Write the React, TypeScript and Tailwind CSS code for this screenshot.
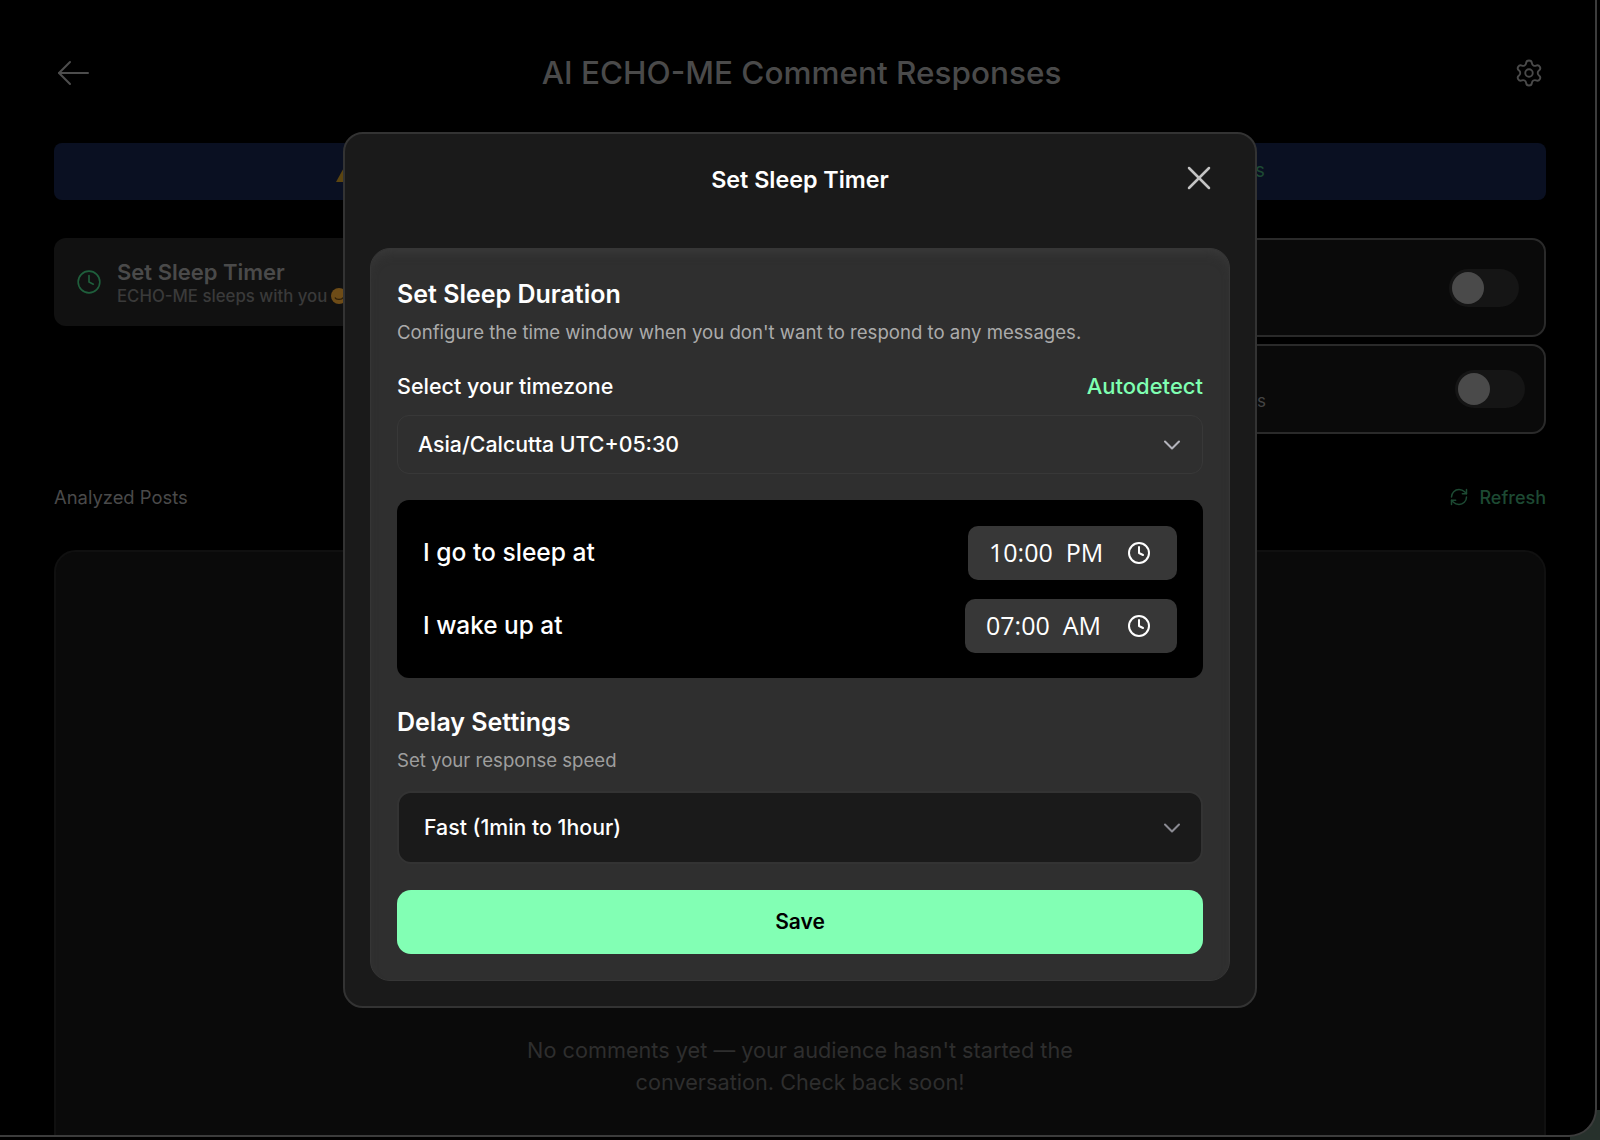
import React from 'react';
import { ChevronDown, Clock, RefreshCw, Settings, X } from 'lucide-react';

const font = "font-['Inter','Liberation_Sans',sans-serif]";

const Toggle: React.FC = () => (
  <div className="w-[70px] h-[38px] rounded-full bg-[#151515] flex items-center px-[3px]">
    <div className="w-8 h-8 rounded-full bg-[#4a4a4a]" />
  </div>
);

const TimeField: React.FC<{ value: string; wide?: boolean }> = ({ value, wide }) => (
  <div className={`h-[54px] rounded-[10px] bg-[#373737] flex items-center justify-between pr-[26px] pl-[21px] ${wide ? 'w-[212px]' : 'w-[209px]'}`}>
    <span className="font-['Open_Sans',sans-serif] text-[25px] text-white whitespace-pre">{value}</span>
    <Clock size={24} strokeWidth={2} className="text-white" />
  </div>
);

function Background() {
  return (
    <div className="pl-[54px] pr-[49px]">
      <header className="h-[42px] mt-[52px] flex items-center justify-between">
        <svg width="32" height="26" viewBox="0 0 32 26" fill="none" stroke="#4d4d4d" strokeWidth="2" strokeLinecap="round" strokeLinejoin="round" className="ml-[3px]">
          <path d="M31 13H2" />
          <path d="M13 2 2 13l11 11" />
        </svg>
        <h1 className="text-[31.5px] font-medium text-[#4a4a4a]">AI ECHO-ME Comment Responses</h1>
        <Settings size={30} strokeWidth={1.5} className="text-[#4a4a4a] mr-[2px]" />
      </header>

      <div className="mt-[49px] h-[57px] rounded-lg bg-[#0a1022] flex items-center justify-center gap-2">
        <svg width="24" height="22" viewBox="0 0 24 22"><path d="M12 1 23 21H1Z" fill="#5c4510" /></svg>
        <span className="text-[18.7px] text-[#1d4a33] whitespace-nowrap">Your AI comment responses are switched off until you connect your Instagram and YouTube accounts</span>
      </div>

      <div className="mt-[38px] grid grid-cols-2 gap-4 h-[196px]">
        <div className="h-[88px] rounded-xl bg-[#111111] flex items-center pl-[22px] gap-[15px]">
          <Clock size={26} strokeWidth={1.5} className="text-[#1f5f3c]" />
          <div>
            <div className="text-[22px] font-semibold leading-[27px] text-[#4a4a4a]">Set Sleep Timer</div>
            <div className="flex items-center gap-[4px] text-[16.8px] leading-[20px] font-medium text-[#3a3a3a]">
              ECHO-ME sleeps with you
              <svg width="16" height="16" viewBox="0 0 16 16">
                <circle cx="8" cy="8" r="8" fill="#6e4c17" />
                <path d="M4 9.5c1 2.5 7 2.5 8 0" fill="none" stroke="#2e1f08" strokeWidth="1.2" />
              </svg>
            </div>
          </div>
        </div>
        <div className="flex flex-col gap-[7px]">
          <div className="h-[99px] rounded-[14px] border-2 border-[#2a2a2a] bg-[#0a0a0a] flex items-center justify-end pr-[25px]">
            <Toggle />
          </div>
          <div className="h-[90px] rounded-[14px] border-2 border-[#2a2a2a] bg-[#0a0a0a] flex items-center pl-4 pr-[19px]">
            <span className="text-[17px] text-[#444444] self-end mb-[18px] ml-auto mr-[189px]">comments</span>
            <Toggle />
          </div>
        </div>
      </div>

      <div className="mt-[49px] h-[28px] flex items-center justify-between">
        <span className="text-[18.4px] text-[#4a4a4a] mt-[1px]">Analyzed Posts</span>
        <span className="flex items-center gap-[10px] text-[18px] font-medium text-[#1d4a33]">
          <RefreshCw size={20} strokeWidth={1.75} />
          Refresh
        </span>
      </div>

      <section className="mt-[39px] h-[700px] rounded-[22px] border-2 border-[#101010] bg-[#0a0a0a] flex justify-center pt-[482px]">
        <p className="w-[570px] text-center text-[21.7px] leading-[32px] text-[#2e2e2e]">
          No comments yet — your audience hasn't started the conversation. Check back soon!
        </p>
      </section>
    </div>
  );
}

function SleepTimerModal() {
  return (
    <div className="absolute inset-0 flex justify-center pt-[132px] pl-[5px]">
      <div className="w-[914px] h-[876px] rounded-[20px] border-2 border-[#333333] bg-[#1a1a1a] flex flex-col px-[25px] pb-[25px]">
        <div className="h-[114px] shrink-0 pb-[22px] relative flex items-center justify-center">
          <h2 className="text-[23.3px] font-semibold text-white">Set Sleep Timer</h2>
          <X size={40} strokeWidth={1.5} className="absolute right-[11px] top-[24px] text-[#c4c4c4]" />
        </div>

        <div className="flex-1 rounded-[20px] bg-[#2f2f2f] border border-[#363636] shadow-[inset_0_8px_12px_-6px_#3c3c3c] px-[26px] pt-[28px]">
          <h3 className="text-[25px] font-semibold leading-[34px] text-white">Set Sleep Duration</h3>
          <p className="mt-[9px] text-[18.6px] leading-[24px] text-[#ababab]">
            Configure the time window when you don't want to respond to any messages.
          </p>

          <div className="mt-[28px] flex items-center justify-between font-medium leading-[28px]">
            <span className="text-[21.5px] text-white">Select your timezone</span>
            <span className="text-[22px] text-[#7fffb2]">Autodetect</span>
          </div>

          <div className="mt-[15px] h-[59px] rounded-xl border border-[#383838] bg-[#2f2f2f] flex items-center justify-between pl-[20px] pr-[16px]">
            <span className="text-[21.3px] font-medium text-white">Asia/Calcutta UTC+05:30</span>
            <ChevronDown size={28} strokeWidth={1.75} className="text-[#b4b4bc]" />
          </div>

          <div className="mt-[26px] h-[178px] rounded-xl bg-black flex flex-col justify-center gap-[19px] pl-[26px] pr-[26px]">
            <div className="flex items-center justify-between">
              <span className="text-[24.6px] font-medium text-white">I go to sleep at</span>
              <TimeField value="10:00  PM" />
            </div>
            <div className="flex items-center justify-between">
              <span className="text-[24.4px] font-medium text-white">I wake up at</span>
              <TimeField value="07:00  AM" wide />
            </div>
          </div>

          <h3 className="mt-[27px] text-[25px] font-semibold leading-[34px] text-white">Delay Settings</h3>
          <p className="mt-[9px] text-[18.6px] leading-[24px] text-[#9e9e9e]">Set your response speed</p>

          <div className="mt-[19px] h-[73px] rounded-[14px] border-2 border-[#333333] bg-[#1a1a1a] flex items-center justify-between pl-[25px] pr-[15px]">
            <span className="text-[21.3px] font-medium text-white">Fast (1min to 1hour)</span>
            <ChevronDown size={28} strokeWidth={1.75} className="text-[#8a8a92]" />
          </div>

          <button className="mt-[26px] w-full h-[64px] rounded-[14px] bg-[#82ffb4] text-[21px] font-semibold text-black">
            Save
          </button>
        </div>
      </div>
    </div>
  );
}

export default function App() {
  return (
    <div className={`relative w-[1600px] h-[1140px] overflow-hidden bg-black ${font}`}>
      <div className="absolute right-0 bottom-0 w-[30px] h-[30px] bg-[#27312c]" />
      <div className="relative w-[1597px] h-[1137px] overflow-hidden bg-black border-r-2 border-b-2 border-[#3c3c3c] rounded-br-[28px]">
        <Background />
        <SleepTimerModal />
      </div>
    </div>
  );
}
